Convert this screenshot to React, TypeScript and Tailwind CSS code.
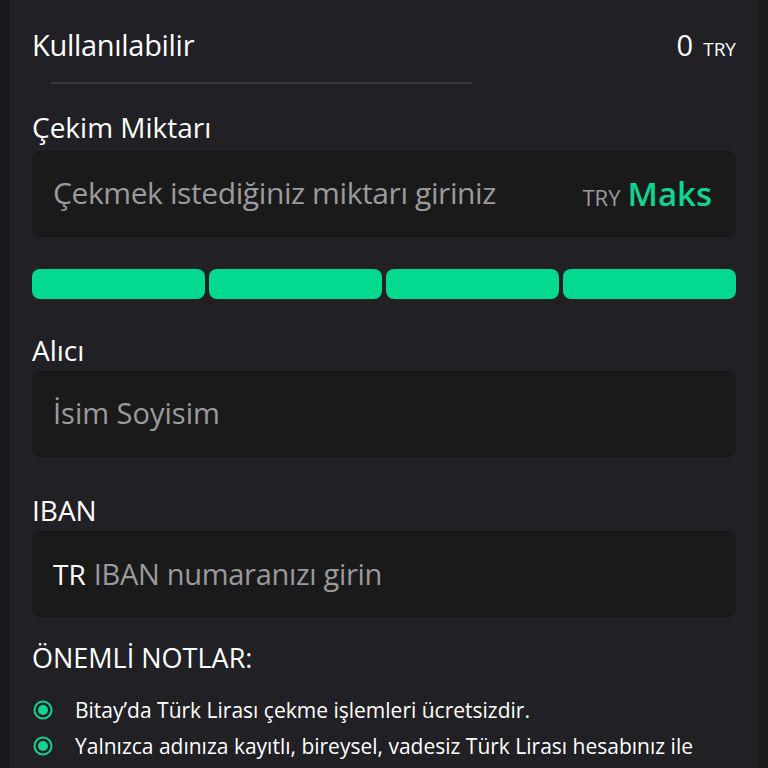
import { } from 'react';

const font = { fontFamily: '"Open Sans", "Noto Sans", sans-serif' };

const notes = [
  'Bitay’da Türk Lirası çekme işlemleri ücretsizdir.',
  'Yalnızca adınıza kayıtlı, bireysel, vadesiz Türk Lirası hesabınız ile',
];

function NoteIcon() {
  return (
    <svg width="20" height="20" viewBox="0 0 20 20" className="shrink-0">
      <circle cx="10" cy="10" r="8.5" fill="none" stroke="#10d48f" strokeWidth="2" />
      <circle cx="10" cy="10" r="5" fill="#10d48f" />
    </svg>
  );
}

export default function App() {
  return (
    <div className="w-[768px] h-[768px] overflow-hidden flex bg-[#19191a] text-white" style={font}>
      <div className="w-[9px] shrink-0 bg-[#18181a]" />
      <div className="flex-1 bg-[#212125] pl-[23px] pr-[21px]">
        {/* Available balance */}
        <div className="flex items-center justify-between h-[50px] mt-[20px]">
          <span className="text-[29px] tracking-[-0.3px]">Kullanılabilir</span>
          <span className="flex items-baseline gap-[10px]">
            <span className="text-[29px]">0</span>
            <span className="text-[19px]">TRY</span>
          </span>
        </div>
        <div className="mx-[18px] mt-[12px] w-[423px] h-[2px] bg-[#38383c] rounded" />

        {/* Amount */}
        <div className="mt-[26px] text-[28px] leading-[34px]">Çekim Miktarı</div>
        <div className="mt-[7px] h-[86px] rounded-lg bg-[#1a1a1b] flex items-center justify-between pl-[21px] pr-[24px]">
          <span className="text-[30px] text-[#9b9b9d] tracking-[-0.4px] -mt-[4px]">Çekmek istediğiniz miktarı giriniz</span>
          <span className="flex items-baseline gap-[7px]">
            <span className="text-[22px] text-[#9b9b9d]">TRY</span>
            <span className="text-[33px] font-semibold text-[#10d48f]">Maks</span>
          </span>
        </div>
        <div className="mt-[32px] grid grid-cols-4 gap-[4px]">
          <div className="h-[30px] rounded-lg bg-[#03da8f]" />
          <div className="h-[30px] rounded-lg bg-[#03da8f]" />
          <div className="h-[30px] rounded-lg bg-[#03da8f]" />
          <div className="h-[30px] rounded-lg bg-[#03da8f]" />
        </div>

        {/* Receiver */}
        <div className="mt-[34px] text-[28px] leading-[34px]">Alıcı</div>
        <div className="mt-[4px] h-[86px] rounded-lg bg-[#1a1a1b] flex items-center pl-[21px]">
          <span className="text-[29px] text-[#9b9b9d] -mt-[2px]">İsim Soyisim</span>
        </div>

        {/* IBAN */}
        <div className="mt-[36px] text-[28px] leading-[34px]">IBAN</div>
        <div className="mt-[4px] h-[86px] rounded-lg bg-[#1a1a1b] flex items-center pl-[21px] gap-[8px] -mt-[0px]">
          <span className="text-[28px]">TR</span>
          <span className="text-[29px] text-[#9b9b9d] tracking-[-0.3px]">IBAN numaranızı girin</span>
        </div>

        {/* Notes */}
        <div className="mt-[24px] text-[27px] font-medium leading-[34px]">ÖNEMLİ NOTLAR:</div>
        <ul className="mt-[25px] flex flex-col gap-[16px]">
          {notes.map(n => (
            <li key={n} className="flex items-center gap-[22px] pl-[1px]">
              <NoteIcon />
              <span className="text-[21px] leading-[20px]">{n}</span>
            </li>
          ))}
        </ul>
      </div>
      <div className="w-[11px] shrink-0 bg-[#1c1c1e]" />
    </div>
  );
}
